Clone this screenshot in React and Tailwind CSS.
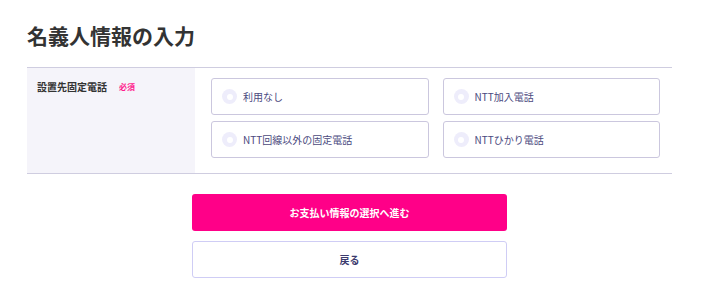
import React from 'react';

const options = ['利用なし', 'NTT加入電話', 'NTT回線以外の固定電話', 'NTTひかり電話'];

const App = () => {
    return (
        <div className="w-[719px] h-[294px] bg-white px-[27px] pt-[22px] font-['Noto_Sans_CJK_JP','Noto_Sans',sans-serif] text-[#333]">
            <h1 className="w-[645px] text-[21px] leading-[26px] font-bold text-[#333] mb-[19px]">名義人情報の入力</h1>

            {/* Form row */}
            <div className="w-[645px] flex border-t border-b border-[#cfcde0]">
                <div className="w-[168px] bg-[#f5f4fa] pl-[10px] pt-[11px] flex items-start gap-[12px]">
                    <span className="text-[10px] leading-[16px] font-bold text-[#333]">設置先固定電話</span>
                    <span className="text-[8px] leading-[16px] font-bold text-[#ff1a8c]">必須</span>
                </div>
                <div className="flex-1 pl-[16px] pr-[12px] pt-[10px] pb-[15px] grid grid-cols-2 gap-x-[14px] gap-y-[6px]">
                    {options.map((label) => (
                        <label key={label} className="h-[37px] flex items-center gap-[6px] pl-[10px] border border-[#cbc7de] rounded-[3px] bg-white cursor-pointer">
                            <span className="w-[15px] h-[15px] rounded-full bg-[#eeedfb] flex items-center justify-center">
                                <span className="w-[6px] h-[6px] rounded-full bg-white" />
                            </span>
                            <span className="text-[10px] text-[#4b4a80]">{label}</span>
                        </label>
                    ))}
                </div>
            </div>

            {/* Actions */}
            <div className="w-[645px] flex flex-col items-center gap-[10px] mt-[20px]">
                <button className="w-[315px] h-[37px] rounded-[3px] bg-[#ff0088] text-white text-[10px] font-bold">
                    お支払い情報の選択へ進む
                </button>
                <button className="w-[315px] h-[37px] rounded-[3px] bg-white border border-[#cfcdf5] text-[#3c3b6e] text-[10px] font-bold">
                    戻る
                </button>
            </div>
        </div>
    );
};

export default App;
